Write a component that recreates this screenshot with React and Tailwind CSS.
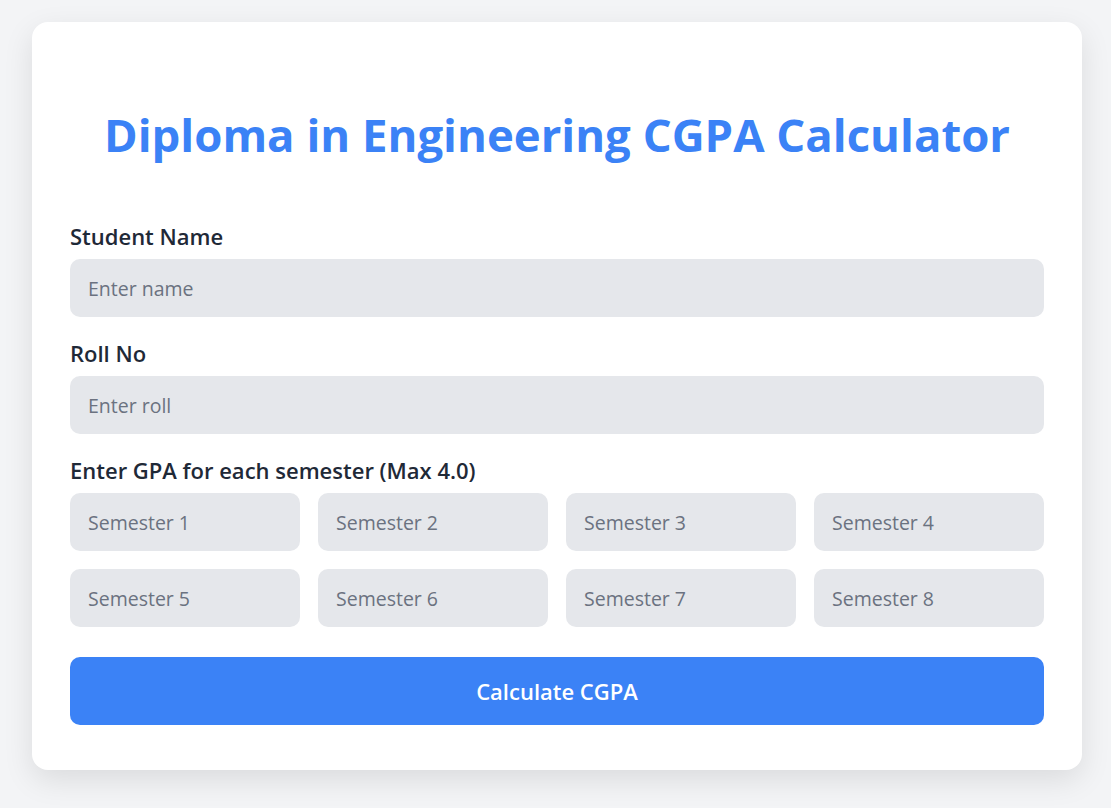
export default function App() {
  const sems = [1, 2, 3, 4, 5, 6, 7, 8];
  const font = { fontFamily: '"Open Sans", "Noto Sans", sans-serif' };
  return (
    <div className="min-h-[808px] bg-[#f3f4f6] pt-[22px] pl-[32px] pr-[29px] pb-[38px]" style={font}>
      <div className="bg-white rounded-[16px] shadow-[0_10px_30px_rgba(0,0,0,0.10)] px-[38px] pt-[84px] pb-[45px]">
        <h1 className="text-center text-[45.5px] leading-[56px] font-bold text-[#3b82f6]">
          Diploma in Engineering CGPA Calculator
        </h1>
        <div className="mt-[59px] flex flex-col">
          <label className="text-[22px] leading-[30px] font-semibold text-[#1f2937] mb-[8px]">Student Name</label>
          <input
            className="h-[58px] rounded-[10px] bg-[#e5e7eb] px-[18px] text-[19.5px] text-[#1f2937] placeholder:text-[#6b7280] outline-none"
            placeholder="Enter name"
          />
          <label className="mt-[21px] text-[22px] leading-[30px] font-semibold text-[#1f2937] mb-[8px]">Roll No</label>
          <input
            className="h-[58px] rounded-[10px] bg-[#e5e7eb] px-[18px] text-[19.5px] text-[#1f2937] placeholder:text-[#6b7280] outline-none"
            placeholder="Enter roll"
          />
          <label className="mt-[21px] text-[22px] leading-[30px] font-semibold text-[#1f2937] mb-[8px]">
            Enter GPA for each semester (Max 4.0)
          </label>
          <div className="grid grid-cols-4 gap-[18px]">
            {sems.map((s) => (
              <input
                key={s}
                className="h-[58px] min-w-0 rounded-[10px] bg-[#e5e7eb] px-[18px] text-[19.5px] text-[#1f2937] placeholder:text-[#6b7280] outline-none"
                placeholder={`Semester ${s}`}
              />
            ))}
          </div>
          <button className="mt-[30px] h-[68px] rounded-[10px] bg-[#3b82f6] text-white text-[22px] font-semibold">
            Calculate CGPA
          </button>
        </div>
      </div>
    </div>
  );
}
